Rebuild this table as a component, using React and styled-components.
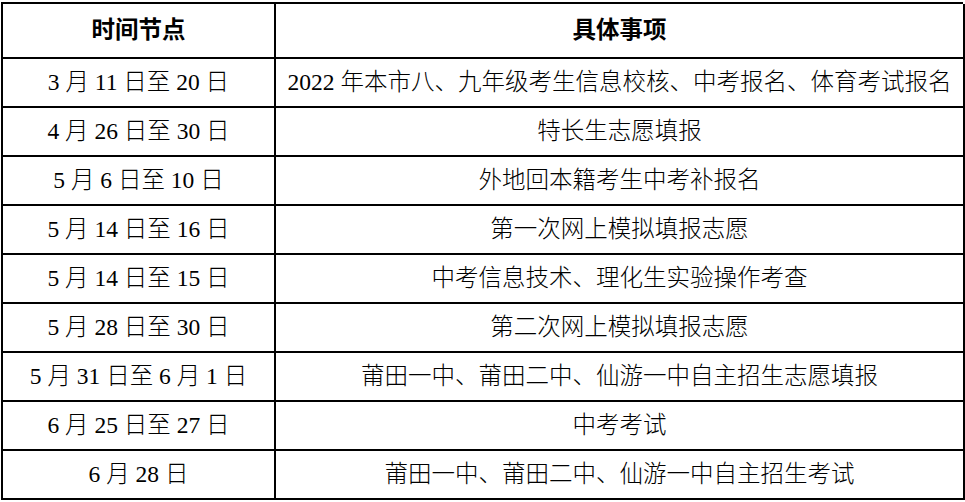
import React from 'react'
import styled, { createGlobalStyle } from 'styled-components'

const rows = [
  ['3 月 11 日至 20 日', '2022 年本市八、九年级考生信息校核、中考报名、体育考试报名'],
  ['4 月 26 日至 30 日', '特长生志愿填报'],
  ['5 月 6 日至 10 日', '外地回本籍考生中考补报名'],
  ['5 月 14 日至 16 日', '第一次网上模拟填报志愿'],
  ['5 月 14 日至 15 日', '中考信息技术、理化生实验操作考查'],
  ['5 月 28 日至 30 日', '第二次网上模拟填报志愿'],
  ['5 月 31 日至 6 月 1 日', '莆田一中、莆田二中、仙游一中自主招生志愿填报'],
  ['6 月 25 日至 27 日', '中考考试'],
  ['6 月 28 日', '莆田一中、莆田二中、仙游一中自主招生考试'],
]

const App = () => {
  return (
    <Page>
      <GlobalStyle />
      <Schedule>
        <Cell header>时间节点</Cell>
        <Cell header>具体事项</Cell>
        {rows.map(([time, item]) => (
          <React.Fragment key={time + item}>
            <Cell>{time}</Cell>
            <Cell>{item}</Cell>
          </React.Fragment>
        ))}
      </Schedule>
    </Page>
  )
}

const GlobalStyle = createGlobalStyle`
  body {
    margin: 0;
    background: #fff;
  }
`;

const Page = styled.div`
  padding: 2px 0 0 1px;
  width: 965px;
  height: 502px;
  box-sizing: border-box;
  background: #fff;
`;

const Schedule = styled.div`
  display: grid;
  grid-template-columns: 273px 689px;
  grid-template-rows: 55px repeat(9, 49px);
  width: 962px;
  border-top: 2px solid #000;
  border-left: 2px solid #000;
  box-sizing: border-box;
`;

const Cell = styled.div`
  display: flex;
  align-items: center;
  justify-content: center;
  padding-bottom: ${(props) => props.header ? '3px' : '0'};
  border-right: 2px solid #000;
  border-bottom: 2px solid #000;
  font-family: ${(props) => props.header
    ? '"Noto Sans CJK SC", sans-serif'
    : '"Liberation Serif", "Noto Sans CJK SC", serif'};
  font-weight: ${(props) => props.header ? 700 : 300};
  font-size: 23.5px;
  color: #000;
  white-space: nowrap;
  line-height: 1;
`;

export default App;
